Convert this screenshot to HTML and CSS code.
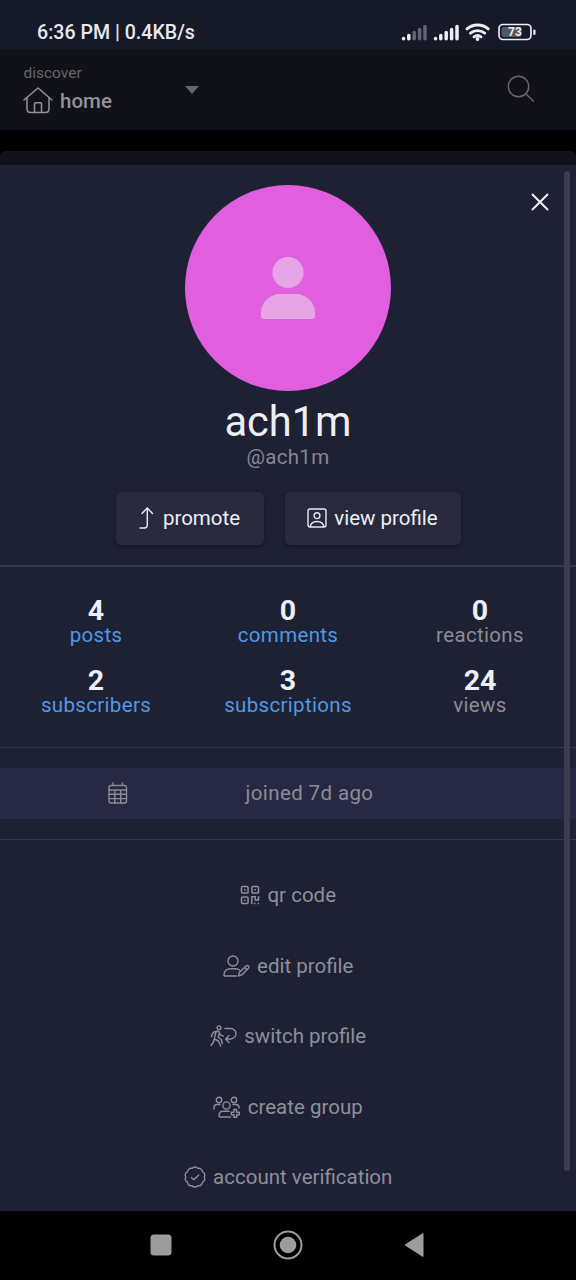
FILE: index.html
```html
<!DOCTYPE html>
<html lang="en">
<head>
<meta charset="utf-8">
<title>ach1m</title>
<link rel="stylesheet" href="styles.css">
</head>
<body>
<div class="screen">
  <div class="status">
    <span class="clock">6:36 PM | 0.4KB/s</span>
    <svg class="signals" width="136" height="20" viewBox="0 0 136 20">
      <g stroke-width="3.500" stroke-linecap="round" stroke="#eceef6">
        <path d="M3.500 17.400v.4M8.800 14.500v3.300"/>
        <path stroke="#62646f" d="M14.200 11.500v6.300M19.600 8.500v9.300M25 5.500v12.300"/>
        <path d="M35.500 17.400v.4M40.800 14.500v3.300M46.200 11.500v6.300M51.600 8.500v9.300M57 5.500v12.300"/>
      </g>
      <g fill="none" stroke="#eceef6" stroke-width="2.900" stroke-linecap="round">
        <path d="M67 7.900c5.800-5.200 15.500-5.200 21.300 0M70.500 12.100c4.200-3.300 10-3.300 14.200 0M74 15.800c2.200-1.600 4.800-1.600 7 0"/>
      </g>
      <circle cx="77.500" cy="18" r="1.900" fill="#eceef6"/>
      <rect x="99" y="3.500" width="32" height="15" rx="4" fill="none" stroke="#eceef6" stroke-width="1.700"/>
      <rect x="101.500" y="6" width="20" height="10" rx="2" fill="#555762"/>
      <path d="M134.400 9.500v3.500" stroke="#eceef6" stroke-width="2.200" stroke-linecap="round"/>
      <text class="battery" x="115" y="15.400" text-anchor="middle">73</text>
    </svg>
  </div>

  <div class="header">
    <div class="location">
      <span class="discover">discover</span>
      <div class="home">
        <svg width="30" height="28" viewBox="0 0 30 28" fill="none" stroke="#929298" stroke-width="1.500" stroke-linecap="round" stroke-linejoin="round"><path d="M1 14 15 2l14 12M4 11.500V23q0 3.500 3.500 3.500h15Q26 26.500 26 23V11.500M11.500 26.500v-9q0-.8.8-.8h5.400q.8 0 .8.800v9"/></svg>
        <span>home</span>
      </div>
    </div>
    <svg class="caret" width="14" height="8" viewBox="0 0 14 8"><path d="M0 0h14L7 8z" fill="#63636b"/></svg>
    <svg class="search" width="28" height="28" viewBox="0 0 28 28" fill="none" stroke="#66666c" stroke-width="1.500" stroke-linecap="round"><circle cx="11.500" cy="11.500" r="10.200"/><path d="m19 19 7.500 7.300"/></svg>
  </div>
  <div class="gap"></div>
  <div class="sheet-edge"></div>

  <div class="sheet">
    <svg class="close" width="18" height="18" viewBox="0 0 18 18" fill="none" stroke="#eeeff6" stroke-width="2" stroke-linecap="round"><path d="m1.500 1.500 15 15m0-15-15 15"/></svg>
    <div class="scrollbar"></div>

    <div class="avatar">
      <svg width="54" height="62" viewBox="0 0 54 62" fill="#e6a6e5"><circle cx="27" cy="15.500" r="15.500"/><path d="M3 62q-3 0-3-3v-3C0 45 9 37 20 37h14c11 0 20 8 20 19v3q0 3-3 3z"/></svg>
    </div>
    <div class="name">ach1m</div>
    <div class="handle">@ach1m</div>

    <div class="actions">
      <div class="button promote">
        <svg width="16" height="22" viewBox="0 0 16 22" fill="none" stroke="#e9eaf3" stroke-width="1.400" stroke-linecap="round" stroke-linejoin="round"><path d="M3 6.500 8.300 1l5.200 5.500M8.300 1v17q0 3-3 3H1"/></svg>
        <span>promote</span>
      </div>
      <div class="button view">
        <svg width="20" height="20" viewBox="0 0 20 20" fill="none" stroke="#e9eaf3" stroke-width="1.400"><rect x="1" y="1" width="18" height="18" rx="2"/><circle cx="10" cy="7.700" r="2.900"/><path d="M3 19c.6-3.300 3-5.500 7-5.500s6.400 2.200 7 5.500"/></svg>
        <span>view profile</span>
      </div>
    </div>

    <div class="stats">
      <div class="stat"><b>4</b><span class="link">posts</span></div>
      <div class="stat"><b>0</b><span class="link">comments</span></div>
      <div class="stat"><b>0</b><span>reactions</span></div>
      <div class="stat"><b>2</b><span class="link">subscribers</span></div>
      <div class="stat"><b>3</b><span class="link">subscriptions</span></div>
      <div class="stat"><b>24</b><span>views</span></div>
    </div>

    <div class="joined-wrap">
      <div class="joined">
        <svg width="20" height="22" viewBox="0 0 20 22" fill="none" stroke="#8b8c98" stroke-width="1.400" stroke-linecap="round"><rect x="1" y="3.500" width="17.500" height="17.500" rx="2"/><path d="M5 1v2.500M14.500 1v2.500M1 8h17.500M1 12.300h17.500M1 16.600h17.500M6.800 8v13M12.700 8v13"/></svg>
        <span>joined 7d ago</span>
      </div>
    </div>

    <div class="menu">
      <div class="item">
        <svg width="20" height="20" viewBox="0 0 20 20" fill="none" stroke="#8d8f9b" stroke-width="1.500"><rect x="1.500" y="1.500" width="6.600" height="6.600" rx="1.200"/><rect x="11.900" y="1.500" width="6.600" height="6.600" rx="1.200"/><rect x="1.500" y="11.900" width="6.600" height="6.600" rx="1.200"/><path d="M4 4.800h1.600M14.400 4.800H16M4 15.200h1.600M11.800 19v-7.300h3.400V15h3.300v-3.800M14 18.500h1.500M17.500 18.500H19"/></svg>
        <span>qr code</span>
      </div>
      <div class="item">
        <svg width="27" height="22" viewBox="0 0 27 22" fill="none" stroke="#8d8f9b" stroke-width="1.400" stroke-linecap="round" stroke-linejoin="round"><circle cx="10" cy="6" r="5"/><path d="M13.500 21H2q-1 0-1-1c0-4 3-6.300 6.500-6.300h5q2.500 0 4 1.400M15.500 21l.8-3.500 6.800-6.600q1.200-1 2.300 0t0 2.300l-6.700 6.700zM21.500 12.500l2.400 2.300"/></svg>
        <span>edit profile</span>
      </div>
      <div class="item">
        <svg width="27" height="22" viewBox="0 0 27 22" fill="none" stroke="#8d8f9b" stroke-width="1.400" stroke-linecap="round" stroke-linejoin="round"><circle cx="9" cy="2.800" r="1.900"/><path d="M1.500 11.500c.5-2.500 1.500-4.300 3.300-4.700L7.500 6.300q1.500 0 2 1.500l.8 2 3 1.300M6 7l-1.500 5.500q-.3 1.300.8 2L8.500 16l2.200 5M9.500 8l-1.300 4.300 3 2.200 1.200 4M4 14.500 3.500 17 1 20.500M15 3.500h5.500c3 0 5.500 2.300 5.500 5s-2.500 5-5.500 5.500H16M19 10.500 15.500 14l3.500 3.500"/></svg>
        <span>switch profile</span>
      </div>
      <div class="item">
        <svg width="27" height="22" viewBox="0 0 27 22" fill="none" stroke="#8d8f9b" stroke-width="1.400" stroke-linecap="round" stroke-linejoin="round"><circle cx="6" cy="4" r="2.700"/><circle cx="21" cy="4" r="2.700"/><circle cx="13.500" cy="9.500" r="3.600"/><path d="M1 13v-1.300c0-2 1.300-3.200 3.200-3.200H7M26 12v-.3c0-2-1.300-3.200-3.200-3.200H20M17.500 21H7q-1 0-1-1c0-3 1.700-4.700 4.200-4.700h6M21 13.500h2.600v2.700h2.700v2.600h-2.700v2.700H21v-2.700h-2.700v-2.600H21z"/></svg>
        <span>create group</span>
      </div>
      <div class="item">
        <svg width="22" height="22" viewBox="0 0 22 22" fill="none" stroke="#8d8f9b" stroke-width="1.400" stroke-linecap="round" stroke-linejoin="round"><path d="M11 1q1.700 0 2.800 1.300 1.800-.4 3.200.7t1.400 2.700q1.700.8 2.200 2.300t-.4 3q.9 1.500.4 3t-2.200 2.300q0 1.800-1.400 2.800t-3.200.6Q12.700 21 11 21t-2.800-1.300q-1.800.4-3.200-.6t-1.400-2.800Q1.900 15.500 1.400 14t.4-3q-.9-1.500-.4-3t2.200-2.300Q3.600 4 5 3t3.200-.7Q9.300 1 11 1zM7.300 11.500l2.500 2.300 5-4.900"/></svg>
        <span>account verification</span>
      </div>
    </div>
  </div>

  <div class="navbar">
    <svg width="22" height="22" viewBox="0 0 22 22"><rect x=".5" y=".5" width="21" height="21" rx="3.500" fill="#9c9c9c"/></svg>
    <svg width="30" height="30" viewBox="0 0 30 30"><circle cx="15" cy="15" r="13.500" fill="none" stroke="#9c9c9c" stroke-width="2"/><circle cx="15" cy="15" r="8.300" fill="#9c9c9c"/></svg>
    <svg width="20" height="26" viewBox="0 0 20 26"><path d="M19 1.500v23L1 13z" fill="#9c9c9c" stroke="#9c9c9c" stroke-linejoin="round"/></svg>
  </div>
</div>
</body>
</html>
```
FILE: styles.css
```css
* { box-sizing: border-box; }
body { margin: 0; background: #000; font-family: Roboto, "Liberation Sans", sans-serif; }
svg { display: block; flex: none; }
.screen { width: 576px; height: 1280px; display: flex; flex-direction: column; overflow: hidden; }

.status { height: 49px; flex: none; background: #161927; display: flex; justify-content: space-between; padding: 21px 40px 0 37px; }
.clock { font-size: 19.6px; line-height: 24px; font-weight: 500; color: #e7e8f0; white-space: nowrap; }
.battery { font-size: 12px; font-weight: 700; fill: #eceef6; }

.header { height: 81px; flex: none; background: #101119; display: flex; align-items: flex-start; padding: 14px 41px 0 23px; }
.location { width: 162px; display: flex; flex-direction: column; }
.discover { padding-left: .5px; font-size: 15.5px; line-height: 21px; color: #66666e; }
.home { display: flex; align-items: center; gap: 7px; height: 32px; font-size: 20.5px; font-weight: 500; color: #929298; }
.home span { padding-top: 2px; }
.caret { margin-top: 23px; }
.search { margin: 12px 0 0 auto; }

.gap { height: 21px; flex: none; }
.sheet-edge { height: 14px; flex: none; background: #10131c; border-radius: 6px 6px 0 0; }

.sheet { position: relative; flex: 1; min-height: 0; background: #1d2133; display: flex; flex-direction: column; align-items: center; padding-top: 20px; }
.sheet > * { flex-shrink: 0; }
.close { position: absolute; top: 28px; right: 27px; }
.scrollbar { position: absolute; top: 6px; right: 6px; width: 6px; height: 1000px; border-radius: 3px; background: #3b3c4d; }

.avatar { width: 206px; height: 206px; border-radius: 50%; background: #e15fdf; display: flex; align-items: center; justify-content: center; }
.name { margin-top: 6px; font-size: 41.6px; line-height: 50px; color: #eeeff6; }
.handle { margin-top: -2px; font-size: 20.5px; line-height: 24px; letter-spacing: .3px; color: #868792; }

.actions { display: flex; gap: 21px; margin-top: 23px; }
.button { height: 53px; padding-bottom: 1px; border-radius: 5px; background: #28293d; box-shadow: 0 2px 4px rgba(10, 10, 22, .45); display: flex; align-items: center; justify-content: center; font-size: 20.5px; color: #edeef6; white-space: nowrap; }
.promote { width: 148px; gap: 8px; }
.view { width: 176px; gap: 7px; }

.stats { width: 100%; height: 183px; margin-top: 20px; border: solid #35384a; border-width: 2px 0 1px; display: grid; grid-template-columns: repeat(3, 1fr); grid-auto-rows: 70px; padding-top: 30px; }
.stat { display: flex; flex-direction: column; align-items: center; font-size: 20.5px; letter-spacing: .33px; line-height: 22px; color: #8b8c96; }
.stat b { font-size: 28.5px; line-height: 27px; letter-spacing: 0; color: #eeeff6; }
.stat .link { color: #5197e3; }

.joined-wrap { width: 100%; padding: 20px 0; border-bottom: 1px solid #35384a; }
.joined { height: 51px; padding-bottom: 1px; background: #272841; display: flex; align-items: center; padding-left: 108px; gap: 117.5px; font-size: 20.5px; letter-spacing: .38px; color: #8b8c98; }

.menu { padding-top: 20px; display: flex; flex-direction: column; align-items: center; }
.item { height: 70.5px; display: flex; align-items: center; gap: 7.5px; font-size: 20.5px; color: #8d8f9b; white-space: nowrap; }

.navbar { height: 69px; flex: none; background: #000; display: flex; align-items: center; justify-content: space-between; padding: 0 152px 1px 150px; }
```
